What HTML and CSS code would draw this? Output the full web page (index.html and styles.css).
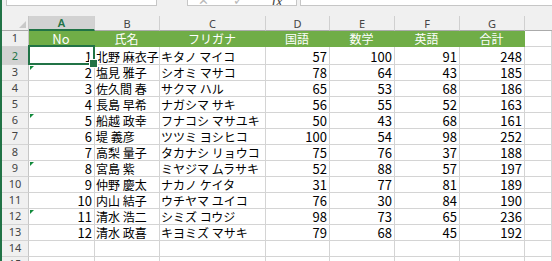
FILE: index.html
```html
<!DOCTYPE html>
<html lang="ja">
<head>
<meta charset="utf-8">
<title>Sheet</title>
<link rel="stylesheet" href="styles.css">
</head>
<body>
<div class="window">
  <div class="edge"></div>
  <div class="main">
    <div class="fbar">
      <div class="namebox"></div>
      <div class="fxbox"><span class="ic icx">✕</span><span class="ic ick">✓</span><span class="ic icf">fx</span></div>
      <div class="formula"></div>
    </div>
    <div class="sheet">
      <div class="corner"><svg width="27" height="15" viewBox="0 0 27 15"><polygon points="24,5 24,12 17,12" fill="#c9c9c9"/></svg></div>
      <div class="ch selh">A</div><div class="ch">B</div><div class="ch">C</div><div class="ch">D</div><div class="ch">E</div><div class="ch">F</div><div class="ch">G</div><div class="ch blank"></div>

      <div class="rh">1</div>
      <div class="c g lat">No</div><div class="c g">氏名</div><div class="c g">フリガナ</div><div class="c g">国語</div><div class="c g">数学</div><div class="c g">英語</div><div class="c g">合計</div><div class="c"></div>

      <div class="rh selr">2</div>
      <div class="c n sel">1</div><div class="c t">北野 麻衣子</div><div class="c t">キタノ マイコ</div><div class="c n">57</div><div class="c n">100</div><div class="c n">91</div><div class="c n">248</div><div class="c"></div>

      <div class="rh">3</div>
      <div class="c n err">2</div><div class="c t">塩見 雅子</div><div class="c t">シオミ マサコ</div><div class="c n">78</div><div class="c n">64</div><div class="c n">43</div><div class="c n">185</div><div class="c"></div>

      <div class="rh">4</div>
      <div class="c n">3</div><div class="c t">佐久間 春</div><div class="c t">サクマ ハル</div><div class="c n">65</div><div class="c n">53</div><div class="c n">68</div><div class="c n">186</div><div class="c"></div>

      <div class="rh">5</div>
      <div class="c n">4</div><div class="c t">長島 早希</div><div class="c t">ナガシマ サキ</div><div class="c n">56</div><div class="c n">55</div><div class="c n">52</div><div class="c n">163</div><div class="c"></div>

      <div class="rh">6</div>
      <div class="c n err">5</div><div class="c t">船越 政幸</div><div class="c t">フナコシ マサユキ</div><div class="c n">50</div><div class="c n">43</div><div class="c n">68</div><div class="c n">161</div><div class="c"></div>

      <div class="rh">7</div>
      <div class="c n">6</div><div class="c t">堤 義彦</div><div class="c t">ツツミ ヨシヒコ</div><div class="c n">100</div><div class="c n">54</div><div class="c n">98</div><div class="c n">252</div><div class="c"></div>

      <div class="rh">8</div>
      <div class="c n">7</div><div class="c t">高梨 量子</div><div class="c t">タカナシ リョウコ</div><div class="c n">75</div><div class="c n">76</div><div class="c n">37</div><div class="c n">188</div><div class="c"></div>

      <div class="rh">9</div>
      <div class="c n err">8</div><div class="c t">宮島 紫</div><div class="c t">ミヤジマ ムラサキ</div><div class="c n">52</div><div class="c n">88</div><div class="c n">57</div><div class="c n">197</div><div class="c"></div>

      <div class="rh">10</div>
      <div class="c n">9</div><div class="c t">仲野 慶太</div><div class="c t">ナカノ ケイタ</div><div class="c n">31</div><div class="c n">77</div><div class="c n">81</div><div class="c n">189</div><div class="c"></div>

      <div class="rh">11</div>
      <div class="c n">10</div><div class="c t">内山 結子</div><div class="c t">ウチヤマ ユイコ</div><div class="c n">76</div><div class="c n">30</div><div class="c n">84</div><div class="c n">190</div><div class="c"></div>

      <div class="rh">12</div>
      <div class="c n err">11</div><div class="c t">清水 浩二</div><div class="c t">シミズ コウジ</div><div class="c n">98</div><div class="c n">73</div><div class="c n">65</div><div class="c n">236</div><div class="c"></div>

      <div class="rh">13</div>
      <div class="c n">12</div><div class="c t">清水 政喜</div><div class="c t">キヨミズ マサキ</div><div class="c n">79</div><div class="c n">68</div><div class="c n">45</div><div class="c n">192</div><div class="c"></div>

      <div class="rh">14</div>
      <div class="c"></div><div class="c"></div><div class="c"></div><div class="c"></div><div class="c"></div><div class="c"></div><div class="c"></div><div class="c"></div>

      <div class="rh">15</div>
      <div class="c"></div><div class="c"></div><div class="c"></div><div class="c"></div><div class="c"></div><div class="c"></div><div class="c"></div><div class="c"></div>
    </div>
  </div>
</div>
</body>
</html>
```

FILE: styles.css
```css
* { box-sizing: border-box; }
html, body { margin: 0; padding: 0; }
body {
  width: 552px;
  height: 261px;
  overflow: hidden;
  background: #ffffff;
  font-family: "Noto Sans CJK JP", "Noto Sans", sans-serif;
  color: #000;
}
.window { display: flex; height: 261px; }
.edge { width: 2px; flex: none; background: #217346; }
.main { flex: 1; min-width: 0; display: flex; flex-direction: column; }

.fbar {
  flex: none;
  height: 16px;
  background: #f0f0f0;
  display: flex;
  align-items: flex-start;
}
.namebox, .fxbox, .formula {
  height: 6px;
  background: #ffffff;
  border: 1px solid #c6c6c6;
  border-top: 0;
}
.namebox { margin-left: 4px; width: 151px; }
.fxbox {
  margin-left: 30px;
  width: 110px;
  overflow: hidden;
  display: flex;
  align-items: flex-end;
  padding-left: 10px;
  gap: 24px;
}
.ic {
  flex: none;
  height: 14px;
  line-height: 14px;
  margin-bottom: -3px;
  font-size: 13px;
  color: #b8b8b8;
  font-family: "DejaVu Sans", sans-serif;
}
.icf {
  margin-left: 4px;
  color: #444;
  font-family: "Liberation Serif", serif;
  font-style: italic;
  font-size: 15px;
}
.formula { margin-left: 3px; flex: 1; border-right: 0; }

.sheet {
  flex: none;
  display: grid;
  grid-template-columns: 27px 66px 65px 106px 64px 65px 65px 65px 1fr;
  grid-template-rows: 15px 16px 18px repeat(13, 16px);
}
.corner {
  background: #f0f0f0;
  border-right: 1px solid #c6c6c6;
  border-bottom: 1px solid #ababab;
}
.corner svg { display: block; }
.ch {
  background: #f0f0f0;
  border-right: 1px solid #d0d0d0;
  border-bottom: 1px solid #ababab;
  color: #444;
  font-family: "Noto Sans", sans-serif;
  font-size: 11px;
  display: flex;
  align-items: center;
  justify-content: center;
}
.ch.blank { border-right: 0; }
.selh {
  background: #d2d2d2;
  color: #217346;
  border-bottom: 2px solid #217346;
  font-weight: 600;
}
.rh {
  background: #f0f0f0;
  border-right: 1px solid #c6c6c6;
  border-bottom: 1px solid #d4d4d4;
  color: #444;
  font-family: "Noto Sans", sans-serif;
  font-size: 11px;
  line-height: 14px;
  display: flex;
  align-items: flex-end;
  justify-content: center;
  padding-bottom: 1px;
}
.selr { background: #d2d2d2; color: #217346; }

.c {
  border-right: 1px solid #d4d4d4;
  border-bottom: 1px solid #d4d4d4;
  display: flex;
  align-items: flex-end;
  font-size: 12px;
  line-height: 15px;
  padding: 0 2px 0 1px;
  white-space: nowrap;
}
.t { overflow: hidden; }
.n { justify-content: flex-end; font-size: 13px; }
.g {
  background: #70ad47;
  color: #ffffff;
  border-color: #70ad47;
  justify-content: center;
}
.g.lat { font-size: 13px; }

.sel, .err { position: relative; }
.sel::after {
  content: "";
  position: absolute;
  left: -1px;
  top: -2px;
  right: -1px;
  bottom: -1px;
  border: 2px solid #217346;
}
.sel::before {
  content: "";
  position: absolute;
  right: -4px;
  bottom: -4px;
  width: 7px;
  height: 7px;
  background: #217346;
  border: 1px solid #ffffff;
  z-index: 2;
}
.err::before {
  content: "";
  position: absolute;
  left: 1px;
  top: 1px;
  width: 0;
  height: 0;
  border-top: 4px solid #128a3c;
  border-right: 4px solid transparent;
}
```
